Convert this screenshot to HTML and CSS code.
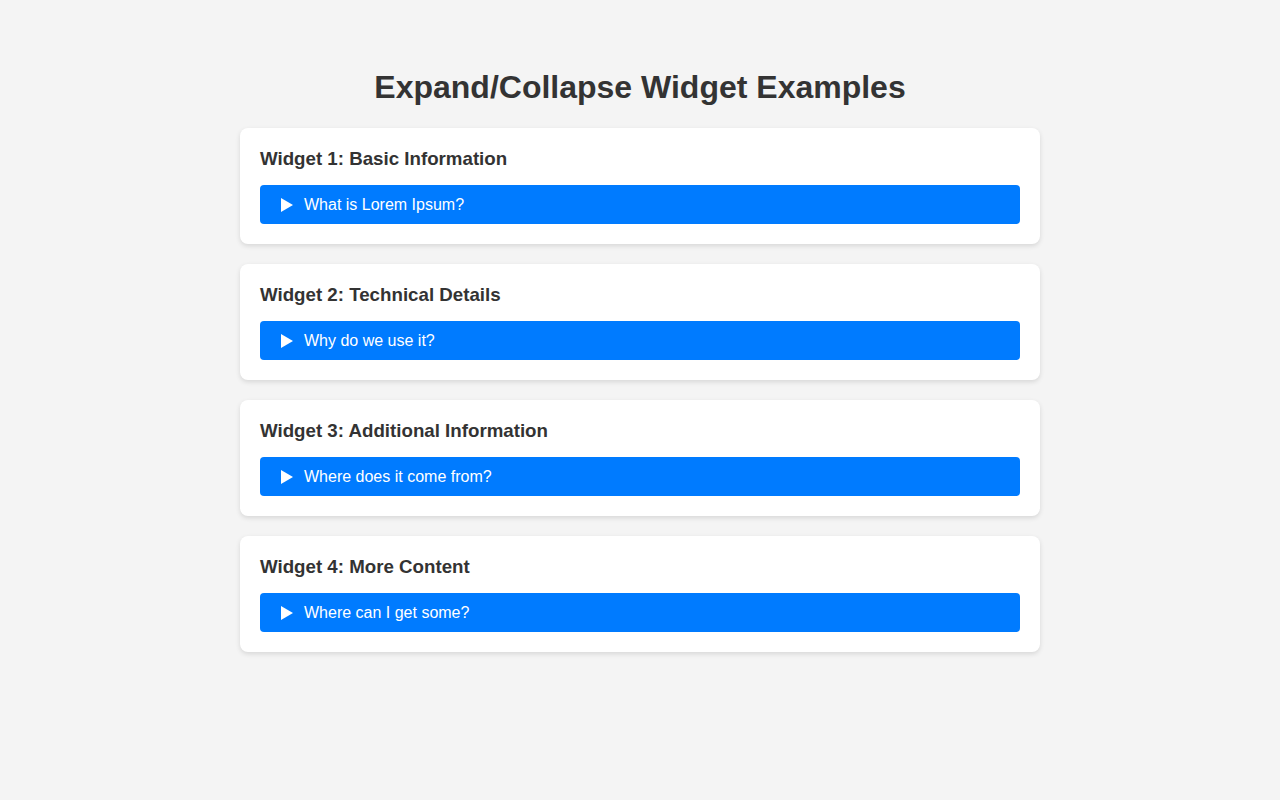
FILE: index.html
```html
<!DOCTYPE html>
<html lang="en">
<head>
<meta charset="utf-8">
<title>Expand/Collapse Widget Examples</title>
<link rel="stylesheet" href="styles.css">
</head>
<body>
<div class="container">
  <h1 class="title">Expand/Collapse Widget Examples</h1>
  <div class="widget">
    <h3 class="widget-title">Widget 1: Basic Information</h3>
    <details class="toggle">
      <summary class="toggle-summary">What is Lorem Ipsum?</summary>
      <p>Lorem Ipsum is simply dummy text of the printing and typesetting industry.</p>
    </details>
  </div>
  <div class="widget">
    <h3 class="widget-title">Widget 2: Technical Details</h3>
    <details class="toggle">
      <summary class="toggle-summary">Why do we use it?</summary>
      <p>It is a long established fact that a reader will be distracted by readable content.</p>
    </details>
  </div>
  <div class="widget">
    <h3 class="widget-title">Widget 3: Additional Information</h3>
    <details class="toggle">
      <summary class="toggle-summary">Where does it come from?</summary>
      <p>Contrary to popular belief, Lorem Ipsum is not simply random text.</p>
    </details>
  </div>
  <div class="widget">
    <h3 class="widget-title">Widget 4: More Content</h3>
    <details class="toggle">
      <summary class="toggle-summary">Where can I get some?</summary>
      <p>There are many variations of passages of Lorem Ipsum available.</p>
    </details>
  </div>
</div>
</body>
</html>
```
FILE: styles.css
```css
html, body {
  margin: 0;
  padding: 0;
}
body {
  background: #f4f4f4;
  font-family: "Liberation Sans", Arial, sans-serif;
  color: #333;
}
.container {
  width: 800px;
  margin: 0 auto;
  padding-top: 69px;
}
.title {
  margin: 0 0 22px;
  font-size: 32px;
  font-weight: bold;
  text-align: center;
  color: #333;
  line-height: 37px;
}
.widget {
  background: #fff;
  border-radius: 8px;
  box-shadow: 0 2px 5px rgba(0, 0, 0, 0.12);
  padding: 20px;
  margin-bottom: 20px;
}
.widget-title {
  margin: 0 0 16px;
  font-size: 18.72px;
  line-height: 21px;
  font-weight: bold;
  color: #333;
}
.toggle {
  margin: 0;
}
.toggle-summary {
  list-style: none;
  display: flex;
  align-items: center;
  background: #007bff;
  color: #fff;
  font-size: 16px;
  line-height: 19px;
  padding: 10px 21px;
  border-radius: 4px;
  cursor: pointer;
}
.toggle-summary::-webkit-details-marker {
  display: none;
}
.toggle-summary::before {
  content: "";
  width: 0;
  height: 0;
  border-left: 12px solid #fff;
  border-top: 7px solid transparent;
  border-bottom: 7px solid transparent;
  margin-right: 11px;
}
.toggle p {
  margin: 10px 0 0;
  line-height: 1.5;
}
```
